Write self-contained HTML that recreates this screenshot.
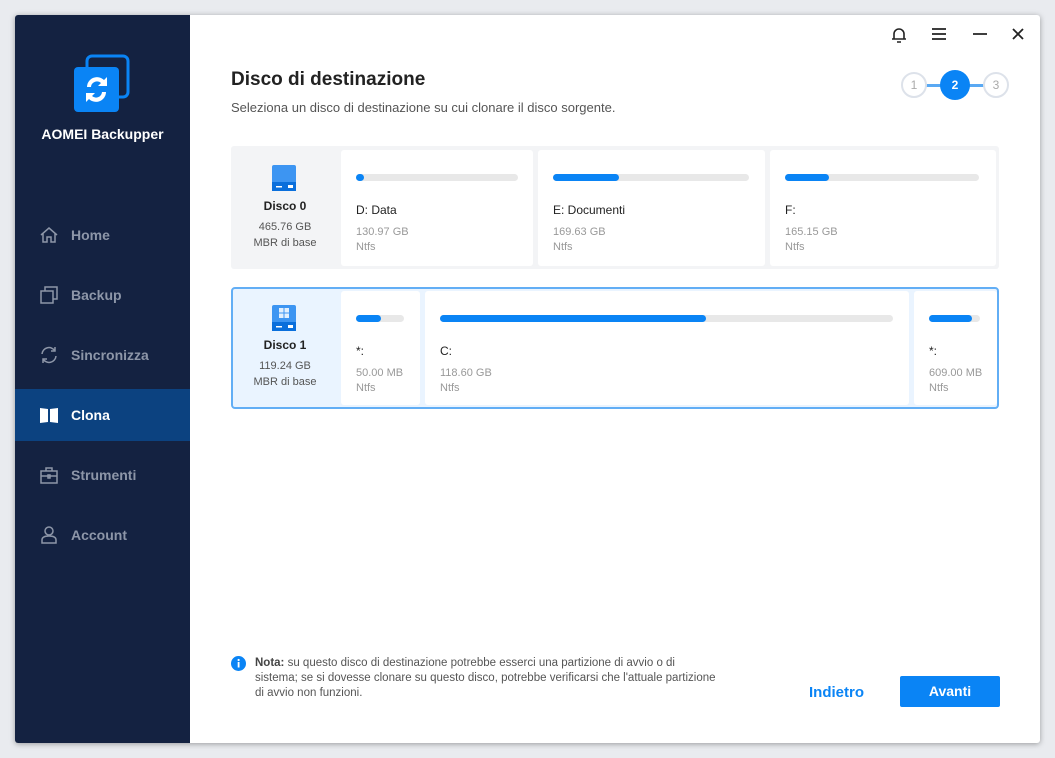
<!DOCTYPE html>
<html><head><meta charset="utf-8"><style>
*{margin:0;padding:0;box-sizing:border-box}
body{width:1055px;height:758px;background:#e9ebef;font-family:"Liberation Sans",sans-serif;position:relative;overflow:hidden}
.win{position:absolute;left:15px;top:15px;width:1025px;height:728px;background:#fff;box-shadow:0 1px 6px rgba(0,0,0,.35);border-radius:3px;overflow:hidden}
.side{position:absolute;left:0;top:0;width:175px;height:728px;background:#142241}
.a{position:absolute}
.nav{position:absolute;left:0;width:175px;height:52px;color:#8d96a8;font-size:14px;font-weight:bold}
.nav span{position:absolute;left:56px;top:18px}
.nav svg{position:absolute;left:24px;top:16px}
.row{position:absolute;left:216px;width:768px}
.card{position:absolute;background:#fff;border-radius:3px}
.bar{position:absolute;left:15px;top:24px;height:7px;background:#e8e8e8;border-radius:4px}
.bar i{display:block;height:7px;background:#0a84f5;border-radius:4px}
.lbl{position:absolute;left:15px;top:53px;font-size:12px;color:#222}
.sz{position:absolute;left:15px;top:75px;font-size:11px;color:#999;line-height:15px}
.dk{position:absolute;left:0;width:108px;text-align:center;font-size:11px;color:#555;line-height:16px}
.dk b{display:block;font-size:12px;color:#222;margin-bottom:5px}
.step{position:absolute;top:57px;width:26px;height:26px;border-radius:50%;border:2px solid #dde2ea;color:#aaa;font-size:12px;text-align:center;line-height:22px;background:#fff}
</style></head><body>
<div class="win">
<div class="side">
 <svg class="a" style="left:58px;top:38px" width="58" height="60" viewBox="0 0 58 60">
  <rect x="14" y="3" width="41" height="41" rx="5" fill="none" stroke="#0a84f5" stroke-width="3"/>
  <rect x="1" y="14" width="45" height="45" rx="4" fill="#0a84f5"/>
  <path d="M14 34a10 10 0 0 1 17-7l3-3v9h-9l3-3a6 6 0 0 0-10 4z" fill="#fff"/>
  <path d="M33 39a10 10 0 0 1-17 7l-3 3v-9h9l-3 3a6 6 0 0 0 10-4z" fill="#fff"/>
 </svg>
 <div class="a" style="left:0;width:175px;top:111px;text-align:center;color:#fff;font-weight:bold;font-size:14px">AOMEI Backupper</div>
 <div class="nav" style="top:194px"><svg width="20" height="20" viewBox="0 0 20 20" fill="none" stroke="#8d96a8" stroke-width="1.5"><path d="M2 10L10 3l8 7M4 8v9h4v-5h4v5h4V8"/></svg><span>Home</span></div>
 <div class="nav" style="top:254px"><svg width="20" height="20" viewBox="0 0 20 20" fill="none" stroke="#8d96a8" stroke-width="1.5"><rect x="2" y="6" width="12" height="12"/><path d="M6 6V2h12v12h-4"/></svg><span>Backup</span></div>
 <div class="nav" style="top:314px"><svg width="20" height="20" viewBox="0 0 20 20" fill="none" stroke="#8d96a8" stroke-width="1.5"><path d="M3 9a7 7 0 0 1 13-3M17 11a7 7 0 0 1-13 3M16 2v4h-4M4 18v-4h4"/></svg><span>Sincronizza</span></div>
 <div class="nav" style="top:374px;background:#0c4280;color:#fff"><svg width="20" height="20" viewBox="0 0 20 20" fill="#fff"><path d="M1 3l8 1v13l-8 1zM11 4l8-1v15l-8-1z"/></svg><span>Clona</span></div>
 <div class="nav" style="top:434px"><svg width="20" height="20" viewBox="0 0 20 20" fill="none" stroke="#8d96a8" stroke-width="1.5"><rect x="2" y="6" width="16" height="12"/><path d="M7 6V3h6v3M2 11h16M9 10h2v3H9z"/></svg><span>Strumenti</span></div>
 <div class="nav" style="top:494px"><svg width="20" height="20" viewBox="0 0 20 20" fill="none" stroke="#8d96a8" stroke-width="1.5"><circle cx="10" cy="6" r="4"/><path d="M3 18v-3c0-3 3-4 7-4s7 1 7 4v3z"/></svg><span>Account</span></div>
</div>

<svg class="a" style="left:876px;top:11px" width="16" height="18" viewBox="0 0 16 18" fill="none" stroke="#222" stroke-width="1.6"><path d="M3 13V8a5 5 0 0 1 10 0v5zM1 13h14M6 16h4"/></svg>
<svg class="a" style="left:917px;top:13px" width="14" height="12" stroke="#222" stroke-width="1.8"><path d="M0 1h14M0 6h14M0 11h14"/></svg>
<svg class="a" style="left:958px;top:13px" width="14" height="12" stroke="#222" stroke-width="1.8"><path d="M0 6h14"/></svg>
<svg class="a" style="left:997px;top:13px" width="12" height="12" stroke="#222" stroke-width="1.8"><path d="M1 1l10 10M11 1L1 11"/></svg>

<div class="a" style="left:216px;top:54px;font-size:19px;font-weight:bold;color:#222">Disco di destinazione</div>
<div class="a" style="left:216px;top:85px;font-size:13px;color:#555">Seleziona un disco di destinazione su cui clonare il disco sorgente.</div>

<div class="a" style="left:910px;top:69px;width:60px;height:3px;background:#5aa9f3"></div>
<div class="step" style="left:886px">1</div>
<div class="step" style="left:925px;top:55px;width:30px;height:30px;border:none;background:#0a84f5;color:#fff;font-weight:bold;line-height:30px">2</div>
<div class="step" style="left:968px">3</div>

<div class="row" style="top:131px;height:123px;background:#f3f4f6;border-radius:3px">
 <svg class="a" style="left:38px;top:17px" width="30" height="30" viewBox="0 0 30 30"><rect x="3" y="2" width="24" height="26" rx="2" fill="#3d95f2"/><rect x="3" y="19" width="24" height="9" fill="#0a6fdc"/><rect x="7" y="23" width="6" height="1.5" fill="#fff"/><rect x="19" y="22" width="5" height="3" fill="#fff"/></svg>
 <div class="dk" style="top:52px"><b>Disco 0</b>465.76 GB<br>MBR di base</div>
 <div class="card" style="left:110px;top:4px;width:192px;height:116px"><div class="bar" style="width:162px"><i style="width:8px"></i></div><div class="lbl">D: Data</div><div class="sz">130.97 GB<br>Ntfs</div></div>
 <div class="card" style="left:307px;top:4px;width:227px;height:116px"><div class="bar" style="width:196px"><i style="width:66px"></i></div><div class="lbl">E: Documenti</div><div class="sz">169.63 GB<br>Ntfs</div></div>
 <div class="card" style="left:539px;top:4px;width:226px;height:116px"><div class="bar" style="width:194px"><i style="width:44px"></i></div><div class="lbl">F:</div><div class="sz">165.15 GB<br>Ntfs</div></div>
</div>

<div class="row" style="top:272px;height:122px;background:#eaf4ff;border:2px solid #62aef5;border-radius:4px">
 <svg class="a" style="left:36px;top:14px" width="30" height="30" viewBox="0 0 30 30"><rect x="3" y="2" width="24" height="26" rx="2" fill="#3d95f2"/><rect x="3" y="19" width="24" height="9" fill="#0a6fdc"/><rect x="7" y="23" width="6" height="1.5" fill="#fff"/><rect x="19" y="22" width="5" height="3" fill="#fff"/><path d="M10 5h4.5v4.5H10zM15.5 5H20v4.5h-4.5zM10 10.5h4.5V15H10zM15.5 10.5H20V15h-4.5z" fill="#fff" opacity=".85"/></svg>
 <div class="dk" style="top:48px;left:-2px"><b>Disco 1</b>119.24 GB<br>MBR di base</div>
 <div class="card" style="left:108px;top:2px;width:79px;height:114px"><div class="bar" style="width:48px"><i style="width:25px"></i></div><div class="lbl">*:</div><div class="sz">50.00 MB<br>Ntfs</div></div>
 <div class="card" style="left:192px;top:2px;width:484px;height:114px"><div class="bar" style="width:453px"><i style="width:266px"></i></div><div class="lbl">C:</div><div class="sz">118.60 GB<br>Ntfs</div></div>
 <div class="card" style="left:681px;top:2px;width:83px;height:114px"><div class="bar" style="width:51px"><i style="width:43px"></i></div><div class="lbl">*:</div><div class="sz">609.00 MB<br>Ntfs</div></div>
</div>

<svg class="a" style="left:216px;top:641px" width="15" height="15" viewBox="0 0 15 15"><circle cx="7.5" cy="7.5" r="7.5" fill="#0a84f5"/><rect x="6.7" y="6" width="1.8" height="5.5" fill="#fff"/><circle cx="7.6" cy="4" r="1.1" fill="#fff"/></svg>
<div class="a" style="left:240px;top:641px;white-space:nowrap;font-size:11.5px;line-height:15px;color:#555">
<b style="color:#444">Nota:</b> su questo disco di destinazione potrebbe esserci una partizione di avvio o di<br>sistema; se si dovesse clonare su questo disco, potrebbe verificarsi che l'attuale partizione<br>di avvio non funzioni.</div>

<div class="a" style="left:794px;top:669px;font-size:15px;font-weight:bold;color:#0a84f5">Indietro</div>
<div class="a" style="left:885px;top:661px;width:100px;height:31px;background:#0a84f5;border-radius:2px;color:#fff;font-size:14px;font-weight:bold;text-align:center;line-height:31px">Avanti</div>
</div>
</body></html>
